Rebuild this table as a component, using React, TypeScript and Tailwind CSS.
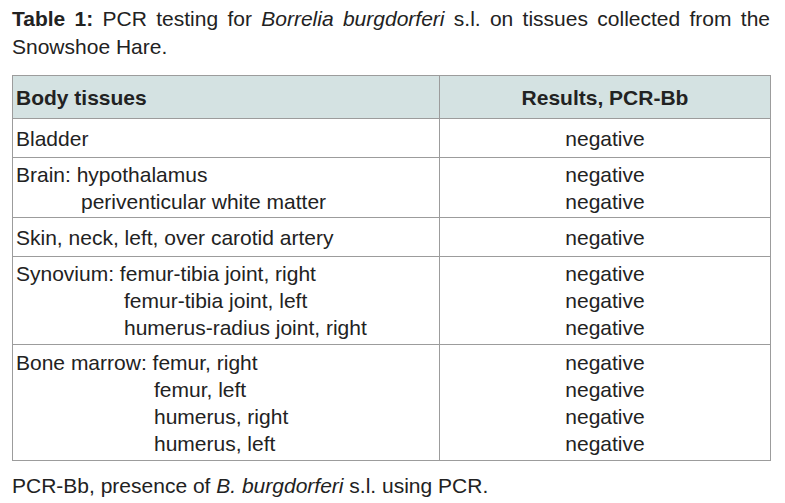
import React from "react";

type Row = {
  h: string;
  lines: { text: string; indent?: string }[];
};

const rows: Row[] = [
  { h: "h-[39px]", lines: [{ text: "Bladder" }] },
  {
    h: "h-[60px]",
    lines: [
      { text: "Brain: hypothalamus" },
      { text: "periventicular white matter", indent: "pl-[65px]" },
    ],
  },
  { h: "h-[39px]", lines: [{ text: "Skin, neck, left, over carotid artery" }] },
  {
    h: "h-[88px]",
    lines: [
      { text: "Synovium: femur-tibia joint, right" },
      { text: "femur-tibia joint, left", indent: "pl-[108px]" },
      { text: "humerus-radius joint, right", indent: "pl-[108px]" },
    ],
  },
  {
    h: "h-[116px]",
    lines: [
      { text: "Bone marrow: femur, right" },
      { text: "femur, left", indent: "pl-[138px]" },
      { text: "humerus, right", indent: "pl-[138px]" },
      { text: "humerus, left", indent: "pl-[138px]" },
    ],
  },
];

export default function App() {
  return (
    <div className="w-[785px] h-[503px] bg-white text-[#222] text-[21px] font-['Liberation_Sans',Arial,sans-serif] overflow-hidden">
      <p className="ml-[12px] w-[758px] pt-[5px] leading-[28px] text-justify">
        <b>Table 1:</b> PCR testing for <i>Borrelia burgdorferi</i> s.l. on
        tissues collected from the Snowshoe Hare.
      </p>

      <div className="ml-[12px] mt-[14px] w-[759px] border border-[#9c9c9c] leading-[27px]">
        <div className="flex h-[42px] bg-[#d4e2e2] font-bold">
          <div className="w-[427px] border-r border-[#9c9c9c] pl-[3px] flex items-center">
            Body tissues
          </div>
          <div className="flex-1 flex items-center justify-center">
            Results, PCR-Bb
          </div>
        </div>

        {rows.map((row, i) => (
          <div key={i} className={`flex border-t border-[#9c9c9c] ${row.h}`}>
            <div className="w-[427px] border-r border-[#9c9c9c] pl-[3px] flex flex-col justify-center">
              {row.lines.map((l, j) => (
                <div key={j} className={l.indent}>
                  {l.text}
                </div>
              ))}
            </div>
            <div className="flex-1 flex flex-col justify-center items-center">
              {row.lines.map((_, j) => (
                <div key={j}>negative</div>
              ))}
            </div>
          </div>
        ))}
      </div>

      <p className="ml-[12px] mt-[11px] leading-[28px]">
        PCR-Bb, presence of <i>B. burgdorferi</i> s.l. using PCR.
      </p>
    </div>
  );
}
